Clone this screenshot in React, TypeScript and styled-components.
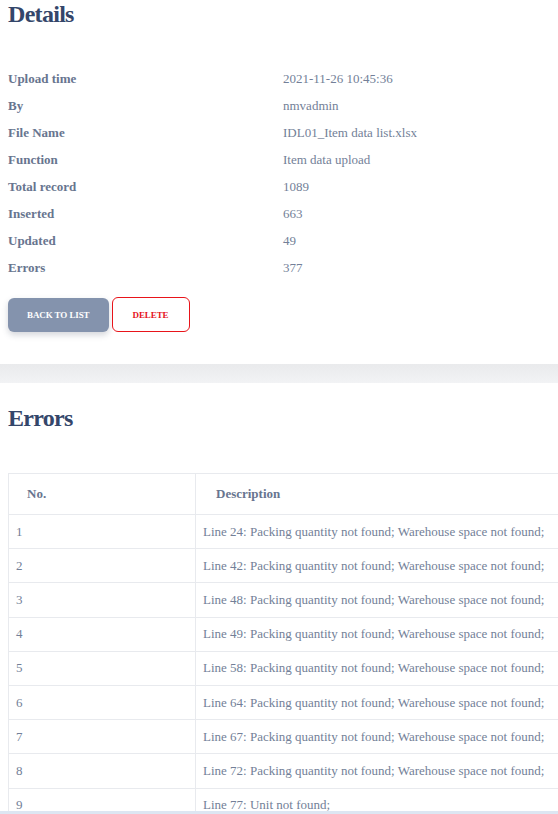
import React from "react";
import styled, { createGlobalStyle } from "styled-components";

const serif = `"Liberation Serif", "Times New Roman", serif`;

const Global = createGlobalStyle`
  html, body { margin: 0; padding: 0; background: #fff; overflow: hidden; }
  body { font-family: ${serif}; }
`;

const Page = styled.div`
  width: 558px;
  height: 814px;
  overflow: hidden;
  position: relative;
  font-family: ${serif};
`;

const Section = styled.section<{ $pb?: number }>`
  padding: 0 8px ${(p) => p.$pb ?? 0}px 8px;
`;

const Title = styled.h2<{ $mt?: number }>`
  margin: ${(p) => p.$mt ?? 0}px 0 0 0;
  font-family: ${serif};
  font-size: 24px;
  line-height: 28px;
  font-weight: 700;
  letter-spacing: -0.7px;
  color: #34466a;
`;

const InfoGrid = styled.div`
  margin-top: 37px;
  display: grid;
  grid-template-columns: 275px 1fr;
  grid-auto-rows: 27px;
  align-items: center;
  font-family: ${serif};
  font-size: 13px;
`;

const Label = styled.div`
  font-family: ${serif};
  font-weight: 700;
  color: #68758f;
`;

const Value = styled.div`
  font-family: ${serif};
  color: #737f98;
`;

const Actions = styled.div`
  margin-top: 16px;
  display: flex;
  gap: 3px;
  align-items: center;
`;

const Button = styled.button<{ $variant: "primary" | "danger" }>`
  height: 34px;
  box-sizing: border-box;
  padding: 0 ${(p) => (p.$variant === "primary" ? 19 : 20)}px;
  border-radius: 6px;
  font-family: ${serif};
  font-size: 9px;
  font-weight: 700;
  text-transform: uppercase;
  letter-spacing: -0.1px;
  cursor: pointer;
  ${(p) =>
    p.$variant === "primary"
      ? `background: #8493ad; color: #fff; border: none; box-shadow: 0 3px 6px rgba(60, 70, 90, 0.22);`
      : `background: #fff; color: #e5121b; border: 1px solid #e8141a; height: 35px; width: 78px;`}
`;

const Band = styled.div`
  height: 19px;
  background: linear-gradient(#e9eaec, #f2f3f5);
`;

const TableWrap = styled.div`
  margin-top: 41px;
  width: 620px;
`;

const Table = styled.table`
  width: 100%;
  border-collapse: collapse;
  font-family: ${serif};
  font-size: 13px;
`;

const Th = styled.th<{ $w?: number }>`
  height: 41px;
  box-sizing: border-box;
  text-align: left;
  font-family: ${serif};
  font-size: 13px;
  font-weight: 700;
  color: #68758f;
  padding: 0 0 0 ${(p) => (p.$w ? 18 : 20)}px;
  border: 1px solid #e8eaee;
  width: ${(p) => (p.$w ? `${p.$w}px` : "auto")};
`;

const Td = styled.td`
  height: 34.2px;
  box-sizing: border-box;
  padding: 0 0 0 7px;
  font-family: ${serif};
  font-size: 13px;
  color: #737f98;
  border: 1px solid #e8eaee;
`;

const BottomStrip = styled.div`
  position: absolute;
  left: 0;
  right: 0;
  bottom: 0;
  height: 3px;
  background: #dde6f2;
`;

const info: [string, string][] = [
  ["Upload time", "2021-11-26 10:45:36"],
  ["By", "nmvadmin"],
  ["File Name", "IDL01_Item data list.xlsx"],
  ["Function", "Item data upload"],
  ["Total record", "1089"],
  ["Inserted", "663"],
  ["Updated", "49"],
  ["Errors", "377"],
];

const errors: [number, string][] = [
  [1, "Line 24: Packing quantity not found; Warehouse space not found;"],
  [2, "Line 42: Packing quantity not found; Warehouse space not found;"],
  [3, "Line 48: Packing quantity not found; Warehouse space not found;"],
  [4, "Line 49: Packing quantity not found; Warehouse space not found;"],
  [5, "Line 58: Packing quantity not found; Warehouse space not found;"],
  [6, "Line 64: Packing quantity not found; Warehouse space not found;"],
  [7, "Line 67: Packing quantity not found; Warehouse space not found;"],
  [8, "Line 72: Packing quantity not found; Warehouse space not found;"],
  [9, "Line 77: Unit not found;"],
];

export default function App() {
  return (
    <Page>
      <Global />
      <Section $pb={32}>
        <Title>Details</Title>
        <InfoGrid>
          {info.map(([k, v]) => (
            <React.Fragment key={k}>
              <Label>{k}</Label>
              <Value>{v}</Value>
            </React.Fragment>
          ))}
        </InfoGrid>
        <Actions>
          <Button $variant="primary">Back to list</Button>
          <Button $variant="danger">Delete</Button>
        </Actions>
      </Section>
      <Band />
      <Section>
        <Title $mt={21}>Errors</Title>
        <TableWrap>
          <Table>
            <thead>
              <tr>
                <Th $w={187}>No.</Th>
                <Th>Description</Th>
              </tr>
            </thead>
            <tbody>
              {errors.map(([n, d]) => (
                <tr key={n}>
                  <Td>{n}</Td>
                  <Td>{d}</Td>
                </tr>
              ))}
            </tbody>
          </Table>
        </TableWrap>
      </Section>
      <BottomStrip />
    </Page>
  );
}
